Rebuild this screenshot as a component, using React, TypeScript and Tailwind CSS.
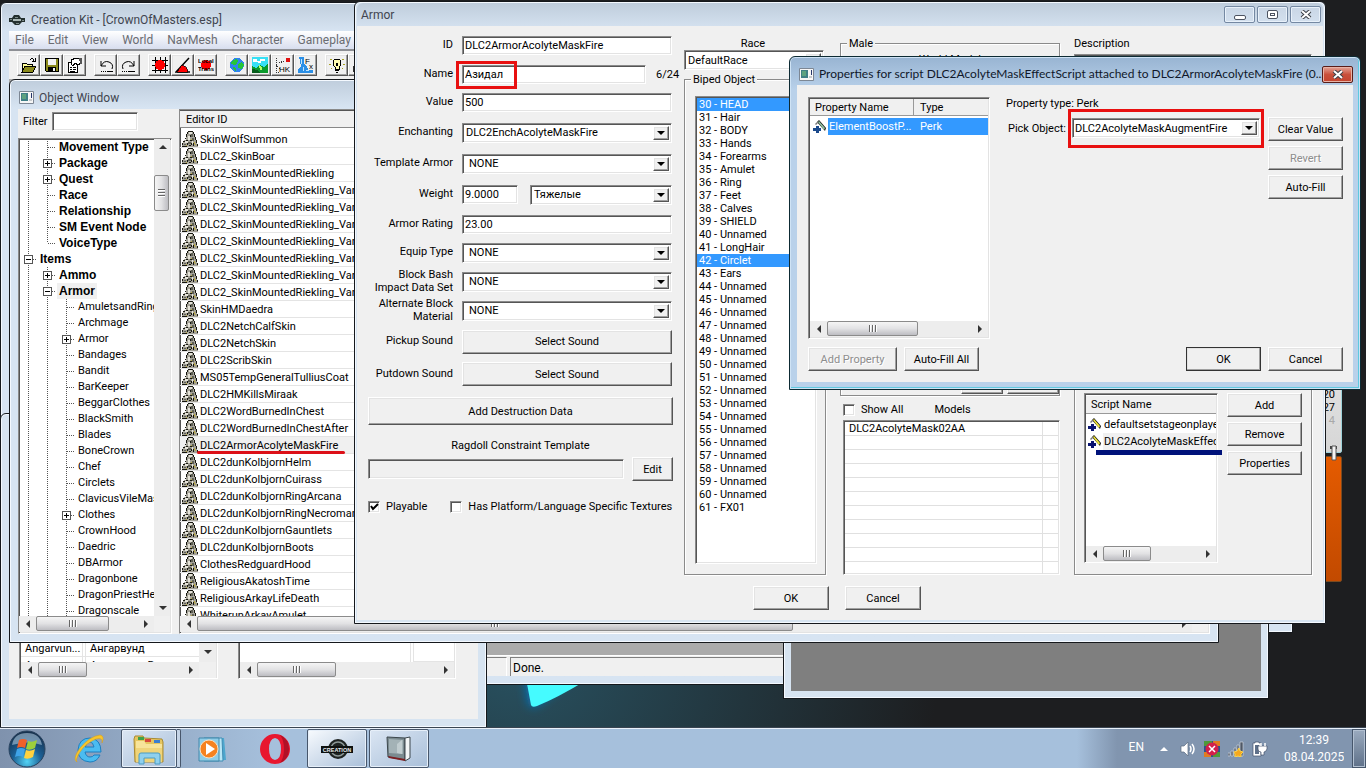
import type { ReactNode } from "react";

const msFont =
	"font-['Roboto','Liberation_Sans',sans-serif] text-[11px] leading-[13px] text-black";
const segoe = "font-['Roboto','Noto_Sans',sans-serif] text-xs";

const raised =
	"bg-[#f0f0f0] border border-t-white border-l-white border-b-[#555] border-r-[#555] shadow-[inset_-1px_-1px_0_#a0a0a0,inset_1px_1px_0_#e3e3e3]";
const sunken =
	"border border-t-[#8a8a8a] border-l-[#8a8a8a] border-b-white border-r-white shadow-[inset_1px_1px_0_#555,inset_-1px_-1px_0_#e3e3e3]";
const frame = "border border-[#15181c] shadow-[inset_0_0_0_1px_#f4f9ff] bg-[#d7e4f1]";
const captionInactive = "bg-linear-to-b from-[#bfcddc] to-[#d7e4f2] to-[28px]";
const thumbX =
	"bg-linear-to-b from-[#f5f5f5] via-[#e2e2e4] to-[#bdbdc2] border border-[#8b8b8b] rounded-xs";
const thumbY =
	"bg-linear-to-r from-[#f5f5f5] via-[#e2e2e4] to-[#bdbdc2] border border-[#8b8b8b] rounded-xs";

type TreeNode = {
	label: string;
	level: number;
	box?: "plus" | "minus";
	last?: boolean;
	selected?: boolean;
};

const tree: TreeNode[] = [
	{ label: "Movement Type", level: 1 },
	{ label: "Package", level: 1, box: "plus" },
	{ label: "Quest", level: 1, box: "plus" },
	{ label: "Race", level: 1 },
	{ label: "Relationship", level: 1 },
	{ label: "SM Event Node", level: 1 },
	{ label: "VoiceType", level: 1, last: true },
	{ label: "Items", level: 0, box: "minus" },
	{ label: "Ammo", level: 1, box: "plus" },
	{ label: "Armor", level: 1, box: "minus", selected: true },
	{ label: "AmuletsandRing", level: 2 },
	{ label: "Archmage", level: 2 },
	{ label: "Armor", level: 2, box: "plus" },
	{ label: "Bandages", level: 2 },
	{ label: "Bandit", level: 2 },
	{ label: "BarKeeper", level: 2 },
	{ label: "BeggarClothes", level: 2 },
	{ label: "BlackSmith", level: 2 },
	{ label: "Blades", level: 2 },
	{ label: "BoneCrown", level: 2 },
	{ label: "Chef", level: 2 },
	{ label: "Circlets", level: 2 },
	{ label: "ClavicusVileMas", level: 2 },
	{ label: "Clothes", level: 2, box: "plus" },
	{ label: "CrownHood", level: 2 },
	{ label: "Daedric", level: 2 },
	{ label: "DBArmor", level: 2 },
	{ label: "Dragonbone", level: 2 },
	{ label: "DragonPriestHe", level: 2 },
	{ label: "Dragonscale", level: 2 },
];

const editorIds = [
	"SkinWolfSummon",
	"DLC2_SkinBoar",
	"DLC2_SkinMountedRiekling",
	"DLC2_SkinMountedRiekling_Var01",
	"DLC2_SkinMountedRiekling_Var02",
	"DLC2_SkinMountedRiekling_Var03",
	"DLC2_SkinMountedRiekling_Var04",
	"DLC2_SkinMountedRiekling_Var05",
	"DLC2_SkinMountedRiekling_Var06",
	"DLC2_SkinMountedRiekling_Var07",
	"SkinHMDaedra",
	"DLC2NetchCalfSkin",
	"DLC2NetchSkin",
	"DLC2ScribSkin",
	"MS05TempGeneralTulliusCoat",
	"DLC2HMKillsMiraak",
	"DLC2WordBurnedInChest",
	"DLC2WordBurnedInChestAfter",
	"DLC2ArmorAcolyteMaskFire",
	"DLC2dunKolbjornHelm",
	"DLC2dunKolbjornCuirass",
	"DLC2dunKolbjornRingArcana",
	"DLC2dunKolbjornRingNecromancer",
	"DLC2dunKolbjornGauntlets",
	"DLC2dunKolbjornBoots",
	"ClothesRedguardHood",
	"ReligiousAkatoshTime",
	"ReligiousArkayLifeDeath",
	"WhiterunArkayAmulet",
];

const bipedNames: Record<number, string> = {
	30: "HEAD",
	31: "Hair",
	32: "BODY",
	33: "Hands",
	34: "Forearms",
	35: "Amulet",
	36: "Ring",
	37: "Feet",
	38: "Calves",
	39: "SHIELD",
	41: "LongHair",
	42: "Circlet",
	43: "Ears",
	61: "FX01",
};
const biped = Array.from({ length: 32 }, (_, i) => i + 30);

/* ---------- small shared controls ---------- */

const Arrow = ({ dir }: { dir: "left" | "right" | "up" | "down" }) => {
	const d = {
		left: "M6 0v8L2 4z",
		right: "M2 0v8l4-4z",
		up: "M0 6h8L4 2z",
		down: "M0 2h8L4 6z",
	}[dir];
	return (
		<svg className="size-2" viewBox="0 0 8 8" aria-hidden="true">
			<path d={d} fill="#333" />
		</svg>
	);
};

const ScrollBtn = ({ dir }: { dir: "left" | "right" | "up" | "down" }) => (
	<button
		type="button"
		aria-label={`Scroll ${dir}`}
		className="flex h-4 w-[17px] shrink-0 items-center justify-center"
	>
		<Arrow dir={dir} />
	</button>
);

const HScroll = ({ thumb }: { thumb: string }) => (
	<div className="flex h-4 shrink-0 bg-[#ededed]">
		<ScrollBtn dir="left" />
		<div className={`flex h-[15px] items-center justify-center gap-px ${thumbX} ${thumb}`}>
			<i className="h-[7px] w-0.5 border-r border-white bg-[#666]" />
			<i className="h-[7px] w-0.5 border-r border-white bg-[#666]" />
			<i className="h-[7px] w-0.5 border-r border-white bg-[#666]" />
		</div>
		<div className="flex-1" />
		<ScrollBtn dir="right" />
	</div>
);

const Button = ({
	children,
	className = "",
	disabled,
}: {
	children: ReactNode;
	className?: string;
	disabled?: boolean;
}) => (
	<button
		type="button"
		disabled={disabled}
		className={`flex h-6 items-center justify-center whitespace-nowrap ${raised} disabled:text-[#8d8d8d] disabled:[text-shadow:1px_1px_0_white] ${className}`}
	>
		{children}
	</button>
);

const Combo = ({
	id,
	value,
	className = "",
	pad = "pl-1",
}: {
	id: string;
	value: string;
	className?: string;
	pad?: string;
}) => (
	<div className={`flex h-5 bg-white p-0.5 ${sunken} ${className}`}>
		<select id={id} className={`min-w-0 flex-1 appearance-none outline-none ${pad}`}>
			<option>{value}</option>
		</select>
		<span className={`flex w-4 items-center justify-center ${raised}`} aria-hidden="true">
			<svg className="h-1 w-2" viewBox="0 0 8 4">
				<path d="M0 0h8L4 4z" />
			</svg>
		</span>
	</div>
);

const Field = ({
	id,
	label,
	row,
	children,
}: {
	id: string;
	label: string;
	row: string;
	children: ReactNode;
}) => (
	<div className={`flex items-center gap-[9px] pr-px ${row}`}>
		<label htmlFor={id} className="w-[85px] shrink-0 pb-0.5 text-right">
			{label}
		</label>
		<div className="flex flex-1 items-center">{children}</div>
	</div>
);

const TextBox = ({
	id,
	value,
	className = "flex-1",
}: {
	id: string;
	value: string;
	className?: string;
}) => (
	<input
		id={id}
		defaultValue={value}
		className={`h-[19px] min-w-0 bg-white px-0.5 outline-none ${sunken} ${className}`}
	/>
);

const Group = ({
	title,
	className = "",
	children,
}: {
	title?: string;
	className?: string;
	children?: ReactNode;
}) => (
	<fieldset
		className={`min-w-0 border border-[#8a8a8a] shadow-[1px_1px_0_white,inset_1px_1px_0_white] ${className}`}
	>
		{title && <legend className="ml-1.5 bg-[#f0f0f0] px-0.5">{title}</legend>}
		{children}
	</fieldset>
);

const CheckBox = ({ id, label, checked }: { id: string; label: string; checked?: boolean }) => (
	<label htmlFor={id} className="grid grid-cols-[12px_auto] items-center gap-x-1.5">
		<input
			id={id}
			type="checkbox"
			defaultChecked={checked}
			className={`peer col-start-1 row-start-1 size-3 appearance-none bg-white ${sunken}`}
		/>
		<svg
			className="pointer-events-none invisible col-start-1 row-start-1 size-3 peer-checked:visible"
			viewBox="0 0 12 12"
			aria-hidden="true"
		>
			<path d="M3 5l2 3 5-5" fill="none" stroke="#000" strokeWidth="2" />
		</svg>
		<span>{label}</span>
	</label>
);

/* ---------- icons ---------- */

const WindowIcon = () => (
	<svg className="h-[13px] w-[15px] shrink-0" viewBox="0 0 15 13" aria-hidden="true">
		<path d="M.5.5h14v12H.5z" fill="#f6f6f6" stroke="#7d8794" />
		<path d="M2 2h7v8H2z" fill="#3f7f86" />
		<path d="M3 3h4v5H3z" fill="#5da27f" />
		<path d="M12 2h1v5h-1z" fill="#26366a" />
		<path d="M10 8h3v2h-3z" fill="#c6c9cd" />
	</svg>
);

const ArmorIcon = () => (
	<svg
		className="h-4 w-4 shrink-0"
		viewBox="0 0 16 16"
		shapeRendering="crispEdges"
		aria-hidden="true"
	>
		<path d="M6 1h5v1h1v3h1v4h1v2h1v3h1v2H0v-2h1v-3h1V9h2V6h1V2h1z" fill="#a3a197" />
		<path d="M7 1h3v2H7zM6 5h2v4H6zM3 10h3v2H3zM10 10h1v3h-1z" fill="#e6e4da" />
		<path d="M9 3h2v3H9zM10 7h2v3h-2zM6 11h3v2H6zM2 13h2v1H2z" fill="#5e5f55" />
		<path
			d="M6 0h5v1H6zM5 1h1v2H5zM11 1h1v2h-1zM12 3h1v3h-1zM4 3h1v3H4zM8 4h1v2H8zM3 7h1v1H3zM13 6h1v3h-1zM4 9h2v1H4zM1 10h2v1H1zM8 9h2v1H8zM14 9h1v3h-1zM0 12h1v2H0zM5 12h1v2H5zM9 12h1v2H9zM15 13h1v2h-1zM0 15h5v1H0zM11 12h1v3h-1zM7 14h2v1H7z"
			fill="#16160f"
		/>
		<path d="M12 11h1v2h-1zM13 13h1v1h-1zM4 14h1v1H4zM9 8h1v1H9z" fill="#b9a83c" />
	</svg>
);

const ScriptIcon = ({ faded }: { faded?: boolean }) => (
	<svg className="h-[13px] w-[13px] shrink-0" viewBox="0 0 13 13" aria-hidden="true">
		<path d="M4 2l2-2 7 8-1 3z" fill="#111" />
		<path d="M5 2l1-1 6 7-1 2z" fill={faded ? "#8fbf9f" : "#f3e93a"} />
		<path d="M2 4l2-2 1 1-2 2z" fill="#777" />
		<path d="M3 6h3v2h2v3H6v2H3v-2H0V8h3z" fill={faded ? "#1b4a8c" : "#0a1470"} />
	</svg>
);

const ToolButton = ({ name, children }: { name: string; children: ReactNode }) => (
	<button
		type="button"
		aria-label={name}
		className={`flex h-[22px] w-[23px] items-center justify-center ${raised}`}
	>
		<svg className="size-4" viewBox="0 0 16 16" shapeRendering="crispEdges">
			{children}
		</svg>
	</button>
);

const Toolbar = () => (
	<div className="flex gap-2 pt-[3px] pl-2">
		<div className="flex">
			<ToolButton name="Open">
				<path d="M1 6h4l1 1h5v8H1z" fill="#ffff9a" stroke="#000" />
				<path d="M1 15l3-6h11l-3 6z" fill="#8b8a1c" stroke="#000" />
				<path d="M9 3q3-3 4 1M11 4h3V1" fill="none" stroke="#000" />
			</ToolButton>
			<ToolButton name="Save">
				<path d="M1.500 1.500h13v13h-12l-1-1z" fill="#8b8a1c" stroke="#000" />
				<path d="M4 2h8v6H4z" fill="#f2f2f2" />
				<path d="M4 10h8v4H4z" fill="#000" />
				<path d="M9 11h2v3H9z" fill="#f2f2f2" />
			</ToolButton>
			<ToolButton name="Properties">
				<path d="M1.500 5.500h9v10h-9z" fill="#fff" stroke="#000" />
				<path d="M3 10h2M6 10h3M3 12h2M6 12h3M3 14h5" stroke="#000" />
				<path d="M4 3l5-2h5v5l-3 2-3-2-2 3-2-2z" fill="#fff" stroke="#000" />
				<path d="M12 1h3v6h-2z" fill="#555" />
			</ToolButton>
		</div>
		<div className="flex">
			<ToolButton name="Undo">
				<path d="M3 9q3-6 8-4t3 7M3 4v5h5" fill="none" stroke="#000" shapeRendering="auto" />
				<path d="M3 14h1M5 14h1M7 14h1M9 14h6" stroke="#000" />
			</ToolButton>
			<ToolButton name="Redo">
				<path d="M13 9q-3-6-8-4t-3 7M13 4v5H8" fill="none" stroke="#000" shapeRendering="auto" />
				<path d="M1 14h1M3 14h1M5 14h1M7 14h7" stroke="#000" />
			</ToolButton>
		</div>
		<div className="flex">
			<ToolButton name="Snap to grid">
				<path d="M3 0v16M8 0v16M13 0v16M0 3h16M0 8h16M0 13h16" stroke="#000" />
				<circle cx="8" cy="8" r="5" fill="#f00" />
			</ToolButton>
			<ToolButton name="Snap to angle">
				<path d="M14 1L1 15h14" fill="none" stroke="#000" strokeWidth="1.500" shapeRendering="auto" />
				<path d="M7 8q5 1 6 7H2z" fill="#f00" stroke="#000" strokeWidth=".7" />
			</ToolButton>
			<ToolButton name="Local transform">
				<circle cx="8" cy="8" r="5" fill="#f00" />
				<text x="0" y="6" fontSize="6" fontWeight="700" fontFamily="Liberation Sans">
					Local
				</text>
				<text x="0" y="14" fontSize="6" fontWeight="700" fontFamily="Liberation Sans">
					Trans
				</text>
			</ToolButton>
		</div>
		<div className="flex">
			<ToolButton name="World">
				<circle cx="8" cy="8" r="7" fill="#2f83ee" />
				<path d="M3 4l4-2 2 2-1 3-3 1-3-1zM9 7l4-2 2 3-2 4-4-1zM4 10l3 1v3l-3-2z" fill="#25c43a" />
			</ToolButton>
			<ToolButton name="Landscape">
				<path d="M0 0h16v16H0z" fill="#37e0f5" />
				<path d="M1 2h4v2h3V2h5v2H9v2H6V5H1z" fill="#fff" />
				<path d="M0 9l4 2 4-3 4 2 4-3v9H0z" fill="#0a9a2c" />
				<path d="M0 12l5 1 3 3H0z" fill="#065c1d" />
				<path d="M7 8l3 2v3H8z" fill="#b7ff66" />
			</ToolButton>
			<ToolButton name="Havok">
				<path d="M1 1v14M1 15h4M1 8l4 4M4 6l5-2" stroke="#333" strokeDasharray="1 1" fill="none" />
				<circle cx="13" cy="3" r="2.500" fill="#e01010" />
				<text x="4" y="15" fontSize="8" fontFamily="Liberation Sans">
					HK
				</text>
			</ToolButton>
			<ToolButton name="Effects">
				<path d="M1 0h5v7q4 2 4 6h5v3H0v-4l3-3z" fill="#2b8fe6" />
				<path d="M3 2h1v5H3zM5 10h1v4H5zM8 13h3v1H8z" fill="#bfe4ff" />
				<text x="7" y="7" fontSize="8" fontFamily="Liberation Sans">
					F
				</text>
				<text x="11" y="12" fontSize="8" fontFamily="Liberation Sans">
					x
				</text>
			</ToolButton>
		</div>
		<div className="flex">
			<ToolButton name="Lights">
				<path d="M8 2q4 0 4 4 0 2-2 4v2H6v-2Q4 8 4 6q0-4 4-4z" fill="#fffbb0" stroke="#000" />
				<path d="M6 13h4M7 15h2M7 6l1 3 1-3" stroke="#000" fill="none" />
				<path d="M1 2l2 1M15 2l-2 1M0 7h2M14 7h2M2 12l1-1M14 12l-1-1" stroke="#a8a020" />
			</ToolButton>
			<ToolButton name="Sky">
				<path d="M2 4q3-3 5 0M1 12q0-4 4-3" stroke="#666" fill="none" />
				<circle cx="4" cy="12" r="3" fill="#bbb" stroke="#333" />
			</ToolButton>
		</div>
	</div>
);

const CaptionButton = ({ name, children }: { name: string; children: ReactNode }) => (
	<button
		type="button"
		aria-label={name}
		className="flex h-[17px] w-[31px] items-center justify-center rounded-xs border border-[#7488a2] bg-linear-to-b from-[#c9d6e6] to-[#d3e0ee] shadow-[inset_0_0_0_1px_#e8f1fa]"
	>
		{children}
	</button>
);

const CloseGlyph = () => (
	<svg className="h-[9px] w-3" viewBox="0 0 12 9" aria-hidden="true">
		<path d="M2 1l8 7M10 1L2 8" stroke="#3c4048" strokeWidth="4" />
		<path d="M2 1l8 7M10 1L2 8" stroke="#fff" strokeWidth="2" />
	</svg>
);

/* ---------- windows ---------- */

const menus = ["File", "Edit", "View", "World", "NavMesh", "Character", "Gameplay"];

const MainWindow = () => (
	<section
		className={`absolute top-0.5 left-0 flex h-[683px] w-[1250px] flex-col rounded-t-md px-2 pb-2 ${frame} ${captionInactive}`}
	>
		<header className="flex h-[28px] shrink-0 items-center gap-1.5 pt-1.5">
			<svg className="h-3 w-4" viewBox="0 0 16 12" aria-hidden="true">
				<path d="M0 4h3l2-3h5l2 3h4v4h-3l-3 3H6L3 8H0z" fill="#24302f" />
				<path d="M4 5h8v2H4z" fill="#a9b7b4" />
				<path d="M1 5h2v1H1zM13 6h2v1h-2zM6 3h3v1H6zM7 9h3v1H7z" fill="#7d8c8a" />
			</svg>
			<h1 className={`text-[#41454f] ${segoe}`}>Creation Kit - [CrownOfMasters.esp]</h1>
		</header>
		<nav
			className={`flex h-[18px] shrink-0 gap-[14px] bg-linear-to-b from-white to-[#d8deef] pl-1.5 leading-[18px] text-[#6a6c72] ${segoe}`}
		>
			{menus.map((m) => (
				<button key={m} type="button">
					{m}
				</button>
			))}
		</nav>
		<div className="h-[30px] shrink-0 border-t-2 border-[#8d8f94] bg-[#f0f0f0]">
			<Toolbar />
		</div>
		<div className="flex-1 bg-[#ababab]" />
		<footer
			className={`flex h-[21px] shrink-0 gap-[3px] border-t border-white bg-[#f0f0f0] pt-px ${msFont}`}
		>
			<div className="w-[498px] border-t border-r border-t-[#808080] border-r-white" />
			<div className="flex-1 border-t border-l border-[#808080] pl-0.5 text-xs leading-5">Done.</div>
		</footer>
	</section>
);

const regions = [
	["Angarvun...", "Ангарвунд"],
	["Angarvun...", "Ангарвунд Вход"],
];

const CellView = () => (
	<section
		className={`absolute top-[413px] left-0 flex h-[315px] w-[487px] flex-col rounded-t-md px-2 pt-7 pb-2 ${frame} ${msFont}`}
	>
		<div className="flex flex-1 items-end gap-5 overflow-hidden bg-[#f0f0f0] pb-10 pl-2.5">
			<div className={`flex h-[220px] w-[199px] flex-col bg-white px-px ${sunken}`}>
				<div className="flex min-h-0 flex-1">
					<div className="flex flex-1 flex-col justify-end overflow-hidden">
						<table className="-mb-3 w-full border-separate border-spacing-0">
							<tbody>
								{regions.map(([id, name]) => (
									<tr key={name}>
										<td className="h-[17px] w-[62px] border-r border-b border-[#e4e4e4] pl-1">{id}</td>
										<td className="w-[3px] border-r border-b border-[#e4e4e4]" />
										<td className="border-b border-[#e4e4e4] pl-1">{name}</td>
									</tr>
								))}
							</tbody>
						</table>
					</div>
					<div className="flex items-end bg-[#ededed] pb-0.5">
						<ScrollBtn dir="down" />
					</div>
				</div>
				<div className="bg-[#f0f0f0] pr-[17px]">
					<HScroll thumb="w-[49px]" />
				</div>
			</div>
			<div className={`flex h-[220px] w-[218px] flex-col bg-white px-px ${sunken}`}>
				<div className="flex flex-1 justify-end">
					<div className="w-1 border-x border-[#e4e4e4]" />
					<div className="w-[40px] border-b border-[#e4e4e4]" />
				</div>
				<HScroll thumb="w-[79px]" />
			</div>
		</div>
	</section>
);

const TreeCell = ({ kind }: { kind: "line" | "tee" | "end" | "plus" | "minus" }) => {
	const boxed = kind === "plus" || kind === "minus";
	return (
		<svg
			className="h-4 w-[19px] shrink-0"
			viewBox="0 0 19 16"
			shapeRendering="crispEdges"
			aria-hidden="true"
		>
			<path d={kind === "end" ? "M9.500 0v8" : "M9.500 0v16"} stroke="#555" strokeDasharray="1 1" />
			{kind !== "line" && <path d="M10 8.500h8" stroke="#555" strokeDasharray="1 1" />}
			{boxed && <path d="M5.500 4.500h8v8h-8z" fill="#fff" stroke="#555" />}
			{boxed && <path d="M7 8.500h5" stroke="#000" />}
			{kind === "plus" && <path d="M9.500 6v5" stroke="#000" />}
		</svg>
	);
};

const TreeRow = ({ node }: { node: TreeNode }) => (
	<li className="flex h-4">
		{Array.from({ length: node.level }, (_, i) => (
			<TreeCell key={i} kind="line" />
		))}
		<TreeCell kind={node.box ?? (node.last ? "end" : "tee")} />
		<span
			className={`px-0.5 leading-4 whitespace-nowrap ${node.level < 2 ? "font-['Liberation_Sans',sans-serif] text-xs leading-4 font-bold" : ""} ${node.selected ? "bg-[#f0f0f0]" : ""}`}
		>
			{node.label}
		</span>
	</li>
);

const ObjectWindow = () => (
	<section
		className={`absolute top-[79px] left-[9px] flex h-[564px] w-[1210px] flex-col rounded-t-md px-2 pb-2 ${frame} ${captionInactive} ${msFont}`}
	>
		<header className="flex h-[29px] shrink-0 items-center gap-[5px] pt-1.5 pl-px">
			<WindowIcon />
			<h2 className={`text-[#41454f] ${segoe}`}>Object Window</h2>
		</header>
		<div className="flex min-h-0 flex-1 gap-[7px] bg-[#f0f0f0]">
			<div className="flex w-[154px] flex-col">
				<div className="flex h-[29px] shrink-0 items-start gap-1 pt-[3px] pl-[5px]">
					<label htmlFor="filter" className="pt-[3px]">
						Filter
					</label>
					<TextBox id="filter" value="" className="w-[86px]" />
				</div>
				<div className={`flex min-h-0 flex-1 flex-col bg-white pr-px pb-px ${sunken}`}>
					<div className="flex min-h-0 flex-1">
						<ul className="flex-1 overflow-hidden">
							{tree.map((n, i) => (
								<TreeRow key={i} node={n} />
							))}
						</ul>
						<div className="flex w-4 flex-col bg-[#ededed]">
							<ScrollBtn dir="up" />
							<div
								className={`mt-5 flex h-9 w-[15px] flex-col items-center justify-center gap-px ${thumbY}`}
							>
								<i className="h-0.5 w-[7px] border-b border-white bg-[#666]" />
								<i className="h-0.5 w-[7px] border-b border-white bg-[#666]" />
								<i className="h-0.5 w-[7px] border-b border-white bg-[#666]" />
							</div>
							<div className="flex-1" />
							<ScrollBtn dir="down" />
						</div>
					</div>
					<div className="bg-[#f0f0f0] pr-4">
						<HScroll thumb="w-[73px]" />
					</div>
				</div>
			</div>
			<div className={`flex min-w-0 flex-1 flex-col bg-white py-px pr-px ${sunken}`}>
				<div className="min-h-0 flex-1 overflow-hidden">
					<table className="w-full border-separate border-spacing-0">
						<thead>
							<tr>
								<th className="h-[17px] border-b border-[#888] bg-[#f0f0f0] pl-1.5 text-left font-normal">
									Editor ID
								</th>
							</tr>
							<tr>
								<td className="h-[3px] p-0" />
							</tr>
						</thead>
						<tbody>
							{editorIds.map((id) => (
								<tr key={id} className={id === "DLC2ArmorAcolyteMaskFire" ? "bg-[#f0f0f0]" : ""}>
									<td className="h-[17px] border-b border-[#e4e4e4] p-0">
										<span className="flex h-4 items-center gap-0.5 pl-0.5">
											<ArmorIcon />
											{id}
										</span>
									</td>
								</tr>
							))}
						</tbody>
					</table>
				</div>
				<div className="bg-[#f0f0f0] pr-4">
					<HScroll thumb="w-[596px]" />
				</div>
			</div>
		</div>
	</section>
);

const noneCombos = [
	{ id: "equip", label: "Equip Type" },
	{ id: "bash", label: "Block Bash Impact Data Set" },
	{ id: "alt", label: "Alternate Block Material" },
];

const ArmorForm = () => (
	<div className="w-[305px] pt-[5px]">
		<Field id="armor-id" label="ID" row="h-[29px]">
			<TextBox id="armor-id" value="DLC2ArmorAcolyteMaskFire" />
		</Field>
		<Field id="armor-name" label="Name" row="h-[29px]">
			<TextBox id="armor-name" value="Азидал" className="w-[184px]" />
			<span className="pl-2.5">6/24</span>
		</Field>
		<Field id="armor-value" label="Value" row="h-[27px]">
			<TextBox id="armor-value" value="500" />
		</Field>
		<Field id="ench" label="Enchanting" row="h-[33px]">
			<Combo id="ench" value="DLC2EnchAcolyteMaskFire" className="flex-1" pad="pl-px" />
		</Field>
		<Field id="template" label="Template Armor" row="h-[29px]">
			<Combo id="template" value="NONE" className="flex-1" />
		</Field>
		<Field id="weight" label="Weight" row="h-[33px]">
			<TextBox id="weight" value="9.0000" className="mr-3 w-[56px]" />
			<Combo id="weight-class" value="Тяжелые" className="flex-1" pad="pl-px" />
		</Field>
		<Field id="rating" label="Armor Rating" row="h-[27px]">
			<TextBox id="rating" value="23.00" />
		</Field>
		{noneCombos.map((c) => (
			<Field key={c.id} id={c.id} label={c.label} row="h-[29px]">
				<Combo id={c.id} value="NONE" className="flex-1" />
			</Field>
		))}
		<Field id="pickup" label="Pickup Sound" row="h-[33px]">
			<Button className="flex-1">Select Sound</Button>
		</Field>
		<Field id="putdown" label="Putdown Sound" row="h-8">
			<Button className="flex-1">Select Sound</Button>
		</Field>
		<Button className="mt-[7px] h-7 w-full">Add Destruction Data</Button>
		<label htmlFor="ragdoll" className="mt-3.5 block text-center">
			Ragdoll Constraint Template
		</label>
		<div className="mt-[5px] flex items-center gap-2">
			<input id="ragdoll" readOnly className={`h-5 min-w-0 flex-1 bg-[#f0f0f0] ${sunken}`} />
			<Button className="h-5 w-[41px]">Edit</Button>
		</div>
		<div className="mt-[19px] flex items-center gap-[23px] whitespace-nowrap">
			<CheckBox id="playable" label="Playable" checked />
			<CheckBox id="platform" label="Has Platform/Language Specific Textures" />
		</div>
	</div>
);

const ArmorWindow = () => (
	<section
		className={`absolute top-px left-[354px] flex h-[623px] w-[972px] flex-col rounded-t-md px-[2px] pt-px pb-[3px] ${frame} ${msFont}`}
	>
		<header
			className={`flex h-[23px] shrink-0 items-center justify-between rounded-t-md pr-0.5 pl-1 ${captionInactive}`}
		>
			<h2 className={`text-[#41454f] ${segoe}`}>Armor</h2>
			<div className="flex gap-0.5">
				<CaptionButton name="Minimize">
					<span className="mt-1.5 h-[5px] w-3 rounded-xs border border-[#4c5361] bg-white" />
				</CaptionButton>
				<CaptionButton name="Maximize">
					<span className="h-[9px] w-[11px] rounded-xs border border-[#4c5361] bg-white p-0.5">
						<span className="block h-full border border-[#4c5361]" />
					</span>
				</CaptionButton>
				<CaptionButton name="Close">
					<CloseGlyph />
				</CaptionButton>
			</div>
		</header>
		<div className="flex flex-1 flex-col bg-[#f0f0f0] pl-[11px]">
			<div className="flex h-[549px]">
				<ArmorForm />
				<div className="ml-[11px] flex w-[142px] flex-col pt-[11px]">
					<label htmlFor="race" className="pr-1 text-center">
						Race
					</label>
					<Combo id="race" value="DefaultRace" className="w-[140px]" pad="pl-px" />
					<Group title="Biped Object" className="mt-[3px] flex-1">
						<div className="h-full px-2.5 pt-2.5 pb-2.5">
							<ul
								role="listbox"
								aria-label="Biped Object"
								className={`h-full w-[122px] overflow-hidden bg-white px-px pt-px ${sunken}`}
							>
								{biped.map((n) => (
									<li
										key={n}
										role="option"
										aria-selected={n === 30 || n === 42}
										className="h-[13px] pl-0.5 aria-selected:bg-[#3399ff] aria-selected:text-white"
									>
										{n} - {bipedNames[n] ?? "Unnamed"}
									</li>
								))}
							</ul>
						</div>
					</Group>
				</div>
				<div className="ml-3.5 flex w-[220px] flex-col pt-[11px]">
					<Group title="Male" className="flex h-[359px] flex-col">
						<p className="pt-[3px] text-center">World Model</p>
						<div className="mt-[304px] flex justify-end gap-1">
							<Button className="w-[42px]">Edit</Button>
							<Button className="w-[52px]">Clear</Button>
						</div>
					</Group>
					<div className="flex h-5 items-end gap-[31px] pl-[3px]">
						<CheckBox id="show-all" label="Show All" />
						<span>Models</span>
					</div>
					<div className={`mt-1 ml-[3px] flex-1 overflow-hidden bg-white p-px ${sunken}`}>
						<table className="w-full border-separate border-spacing-0" aria-label="Models">
							<tbody>
								{Array.from({ length: 11 }, (_, i) => (
									<tr key={i}>
										<td className="h-3.5 w-[198px] border-r border-b border-[#e0e0e0] pl-1">
											{i === 0 ? "DLC2AcolyteMask02AA" : ""}
										</td>
										<td className="border-b border-[#e0e0e0]" />
									</tr>
								))}
							</tbody>
						</table>
					</div>
				</div>
				<div className="ml-3.5 flex w-[238px] flex-col pt-[11px]">
					<label htmlFor="desc">Description</label>
					<textarea id="desc" className={`mt-1 h-20 resize-none bg-white ${sunken}`} />
					<Group className="mt-2 flex flex-1 items-end pb-[11px] pl-[9px]">
						<div className="flex h-[170px] gap-[9px]">
							<div className={`flex w-[134px] flex-col bg-white pt-0.5 pr-px pl-px ${sunken}`}>
								<div className="flex-1 overflow-hidden">
									<table className="w-full border-separate border-spacing-0">
										<thead>
											<tr>
												<th className="h-[18px] border-b border-[#999] bg-[#f0f0f0] pl-[5px] text-left font-normal">
													Script Name
												</th>
											</tr>
										</thead>
										<tbody>
											{["defaultsetstageonplaye", "DLC2AcolyteMaskEffect"].map((s, i) => (
												<tr key={s}>
													<td className={i === 0 ? "p-0 pt-0.5" : "p-0"}>
														<span className="flex h-[17px] w-[130px] items-center gap-0.5 overflow-hidden pl-0.5">
															<ScriptIcon />
															<span className={`flex-1 pl-px leading-[17px] ${i === 1 ? "bg-[#f0f0f0]" : ""}`}>
																{s}
															</span>
														</span>
													</td>
												</tr>
											))}
										</tbody>
									</table>
								</div>
								<HScroll thumb="w-12" />
							</div>
							<div className="flex w-[75px] flex-col gap-[5px]">
								<Button>Add</Button>
								<Button>Remove</Button>
								<Button>Properties</Button>
							</div>
						</div>
					</Group>
				</div>
			</div>
			<div className="mt-[11px] flex gap-4 pl-[385px]">
				<Button className="w-[76px]">OK</Button>
				<Button className="w-[76px]">Cancel</Button>
			</div>
		</div>
	</section>
);

const PropertiesWindow = () => (
	<section
		className={`absolute top-14 left-[789px] flex h-[334px] w-[572px] flex-col rounded-t-md border border-[#0d2a33] bg-linear-to-b from-[#98b4d2] via-[#b9d1ea] via-10% to-[#b9d1ea] px-[7px] pb-[7px] shadow-[inset_0_0_0_1px_#cfe3f5,inset_-1px_-1px_0_1px_#5fc9e0] ${msFont}`}
	>
		<header className="flex h-7 shrink-0 items-center justify-between pt-1.5 pl-0.5">
			<div className="flex min-w-0 items-center gap-[5px] whitespace-nowrap">
				<WindowIcon />
				<h2 className="font-['Lato','Noto_Sans',sans-serif] text-xs text-[#10182a]">
					Properties for script DLC2AcolyteMaskEffectScript attached to DLC2ArmorAcolyteMaskFire (0...
				</h2>
			</div>
			<button
				type="button"
				aria-label="Close"
				className="flex h-[17px] w-[31px] shrink-0 items-center justify-center rounded-xs border border-[#5a1d18] bg-linear-to-b from-[#e1a397] via-[#c9503c] to-[#c4442f] shadow-[inset_0_0_0_1px_#e8b3a6]"
			>
				<CloseGlyph />
			</button>
		</header>
		<div className="flex flex-1 flex-col bg-[#f0f0f0] pt-3 pr-2.5 pb-[11px] pl-[11px]">
			<div className="flex flex-1">
				<div className={`flex h-[242px] w-[182px] shrink-0 flex-col bg-white p-px ${sunken}`}>
					<table className="w-full border-separate border-spacing-0">
						<thead>
							<tr className="text-left">
								<th className="h-[17px] w-[104px] border-r border-b border-[#999] bg-[#f0f0f0] pl-[5px] font-normal">
									Property Name
								</th>
								<th className="border-b border-[#999] bg-[#f0f0f0] pl-1.5 font-normal">Type</th>
							</tr>
						</thead>
						<tbody>
							<tr>
								<td className="p-0 pt-0.5">
									<span className="flex h-[17px] items-center gap-0.5 pl-[3px]">
										<ScriptIcon faded />
										<span className="flex-1 bg-[#3399ff] pl-px leading-[17px] text-white">
											ElementBoostP...
										</span>
									</span>
								</td>
								<td className="p-0 pt-0.5">
									<span className="block h-[17px] bg-[#3399ff] pl-1.5 leading-[17px] text-white">Perk</span>
								</td>
							</tr>
						</tbody>
					</table>
					<div className="flex-1" />
					<HScroll thumb="w-[91px]" />
				</div>
				{/* the type line runs on over the picker's column */}
				<div className="min-w-0 flex-1 pl-4 whitespace-nowrap">
					<p>Property type: Perk</p>
					<label htmlFor="pick" className="mt-3 block pl-0.5">
						Pick Object:
					</label>
				</div>
				<div className="mt-3 shrink-0 self-start border-3 border-[#e81010] px-px pt-1.5 pb-[7px]">
					<Combo id="pick" value="DLC2AcolyteMaskAugmentFire" className="w-[188px]" pad="pl-0" />
				</div>
				<div className="ml-1 flex w-[75px] shrink-0 flex-col gap-[5px] pt-5">
					<Button>Clear Value</Button>
					<Button disabled>Revert</Button>
					<Button>Auto-Fill</Button>
				</div>
			</div>
			<div className="flex gap-[7px]">
				<Button disabled className="w-[89px]">
					Add Property
				</Button>
				<Button className="w-[75px]">Auto-Fill All</Button>
				<div className="flex-1" />
				<Button className="w-[75px] outline outline-offset-[-1px] outline-[#333]">OK</Button>
				<Button className="w-[75px]">Cancel</Button>
			</div>
		</div>
	</section>
);

const Wallpaper = () => (
	<svg
		className="absolute bottom-0 left-[487px] h-[60px] w-[300px]"
		viewBox="0 0 300 60"
		aria-hidden="true"
	>
		<defs>
			<filter id="glow" x="-50%" y="-50%" width="200%" height="200%">
				<feGaussianBlur stdDeviation="5" />
			</filter>
		</defs>
		<path d="M36 0h62L50 38q-6 3-9-2z" fill="#0d6fb0" filter="url(#glow)" />
		<path d="M37 0h61v13Q70 30 50 38q-5 2-6-1z" fill="#45fbff" />
	</svg>
);

const Gadget = () => (
	<div className={`absolute top-[300px] left-[1280px] w-[62px] text-right ${msFont}`}>
		<div className="flex h-[153px] flex-col justify-end rounded-xs border border-[#9fd3da] bg-linear-to-b from-[#ececec] to-[#d6d6d6] pr-1.5 pb-[25px]">
			<p>20</p>
			<p>27</p>
			<p className="text-[#a8a8a8]">4</p>
		</div>
		<div className="mt-[3px] h-[126px] rounded-xs border border-[#7a4a20] bg-linear-to-b from-[#e55b00] to-[#c24a00]" />
		<svg className="absolute top-[145px] right-1 h-4 w-2" viewBox="0 0 8 16" aria-hidden="true">
			<path d="M0 1h7v3H0z" fill="#444" />
			<path d="M2 1h4v14H2z" fill="#f3f3f3" stroke="#555" />
		</svg>
	</div>
);

/* ---------- taskbar ---------- */

const TaskButton = ({
	name,
	look = "",
	children,
}: {
	name: string;
	look?: string;
	children: ReactNode;
}) => (
	<button type="button" aria-label={name} className={`flex h-full items-center justify-center ${look}`}>
		{children}
	</button>
);

const openTask =
	"border border-[#47566b] rounded-xs bg-linear-to-br to-[#a9bfd9] shadow-[inset_0_0_0_1px_#e6eff9]";

const Taskbar = () => (
	<footer className="relative flex h-10 shrink-0 border-t border-[#e9f1fa] bg-linear-to-r from-[#7f92ad] via-[#a6c0dc] via-20% to-[#a6c0dc] shadow-[0_-1px_0_#3a4552]">
		<TaskButton name="Start" look="w-[54px]">
			<svg className="size-[38px]" viewBox="0 0 38 38" aria-hidden="true">
				<defs>
					<radialGradient id="orb" cx="50%" cy="85%" r="80%">
						<stop offset="0" stopColor="#53d3f5" />
						<stop offset=".5" stopColor="#1b5f94" />
						<stop offset="1" stopColor="#17324f" />
					</radialGradient>
				</defs>
				<circle cx="19" cy="19" r="18" fill="url(#orb)" stroke="#29425e" />
				<path d="M4 15Q6 3 19 3t15 12q-14-5-30 0z" fill="#b9d3e8" opacity=".55" />
				<path d="M11 10q4-2 8 0l-2 8q-4-2-8 0z" fill="#f0602a" />
				<path d="M20 11q4 2 9-1l-2 8q-5 3-9 1z" fill="#9ccf3c" />
				<path d="M9 19q4-2 8 0l-2 8q-4-2-8 0z" fill="#3fa3e8" />
				<path d="M18 20q4 2 9-1l-2 8q-5 3-9 1z" fill="#ffd23f" />
			</svg>
		</TaskButton>
		<TaskButton name="Internet Explorer" look="ml-2 w-[54px]">
			<svg className="size-8" viewBox="0 0 32 32" aria-hidden="true">
				<path
					d="M28 19H12q1 5 5 5 3 0 4-2h6q-3 7-10 7Q5 28 5 17 6 5 17 5q11 1 11 14zM21 14q-1-5-4-5t-5 5z"
					fill="#4bbcf0"
					stroke="#1d7fc0"
				/>
				<path
					d="M4 29q-5-3 3-14Q17 3 27 2q5 1 2 8 1-6-6-4Q13 10 7 19q-5 8-3 10z"
					fill="#f7c52c"
					stroke="#d99c14"
					strokeWidth=".5"
				/>
			</svg>
		</TaskButton>
		<TaskButton name="Explorer" look={`ml-[5px] w-[56px] from-[#dbe6f3] ${openTask}`}>
			<svg className="size-8" viewBox="0 0 32 32" aria-hidden="true">
				<path d="M1 6l1-3h8l1 2 18 1 1 3v20H2z" fill="#e6c65f" stroke="#a88a35" />
				<path d="M5 4h6v3H5z" fill="#3fa24a" />
				<path d="M12 6h6v3h-6z" fill="#d8483c" />
				<path d="M21 7h6v3h-6z" fill="#3c7fd0" />
				<path d="M3 8h8l2 3h16v17H3z" fill="#f7e49a" />
				<path d="M3 15h26v14H3z" fill="#efd47a" />
				<path d="M6 31v-9q0-2 2-2h17q2 0 2 2v9h-5v-6H11v6z" fill="#8fd0ee" stroke="#4a9cc4" />
			</svg>
		</TaskButton>
		<span className="h-full w-1 rounded-r-xs border-y border-r border-[#47566b] bg-[#c5d4e6]" />
		<TaskButton name="Media Player" look="ml-[3px] w-[56px]">
			<svg className="size-8" viewBox="0 0 32 32" aria-hidden="true">
				<path d="M10 5h18l2 22H12z" fill="#4da7ce" />
				<path d="M8 5h18l1 23H8z" fill="#b8e6f5" stroke="#3f8cb3" />
				<path d="M3 5h20v23H3z" fill="#8fcde8" stroke="#4388aa" />
				<circle cx="13" cy="16" r="9" fill="#f58220" stroke="#fbe0c0" />
				<path d="M10 10v12l9-6z" fill="#fff" />
			</svg>
		</TaskButton>
		<TaskButton name="Opera" look="ml-2 w-[54px]">
			<svg className="size-8" viewBox="0 0 32 32" aria-hidden="true">
				<path
					d="M16 1a15 15 0 100 30 15 15 0 000-30zm0 4q6 1 6 11t-6 11q-6-1-6-11T16 5z"
					fill="#e8172f"
					fillRule="evenodd"
				/>
				<path d="M21 2q9 4 9 14t-9 14q4-5 4-14T21 2z" fill="#b01126" />
			</svg>
		</TaskButton>
		<TaskButton name="Creation Kit" look={`ml-[5px] w-[60px] from-[#f8fbfe] ${openTask}`}>
			<svg className="h-6 w-8" viewBox="0 0 32 24" aria-hidden="true">
				<circle cx="17" cy="12" r="10" fill="#1e2322" />
				<circle cx="17" cy="12" r="7" fill="none" stroke="#8e9a99" strokeWidth="1.500" />
				<path d="M0 9h32v7H0z" fill="#0e1110" />
				<text
					x="16"
					y="14.500"
					fontSize="5.500"
					fontWeight="700"
					fill="#e8eeee"
					textAnchor="middle"
					fontFamily="Liberation Sans"
				>
					CREATION
				</text>
			</svg>
		</TaskButton>
		<TaskButton name="Drive" look={`ml-0.5 w-[60px] from-[#dbe6f3] ${openTask}`}>
			<svg className="size-7" viewBox="0 0 28 28" aria-hidden="true">
				<path d="M2 2l18 1v22L3 22z" fill="#7b8b90" stroke="#3c474c" />
				<path d="M4 4l14 1v14L4 18z" fill="#a3b2b6" />
				<path d="M12 9l5-4v14l-5-1z" fill="#c0cccf" />
				<path d="M20 3l5-1v21l-5 3z" fill="#f2f5f6" stroke="#3c474c" />
				<path d="M3 21l17 3v2L4 23z" fill="#7d1f22" />
			</svg>
		</TaskButton>
		<div className="flex-1" />
		<div
			className={`flex items-center bg-linear-to-r from-transparent to-[#8195af] to-15% pl-[52px] text-white ${segoe}`}
		>
			<span className="pb-1">EN</span>
			<div className="ml-4 flex items-center gap-2">
				<svg className="h-1 w-2" viewBox="0 0 8 4" aria-hidden="true">
					<path d="M0 4l4-4 4 4z" fill="#fff" />
				</svg>
				<svg className="ml-1 size-4" viewBox="0 0 16 16" aria-hidden="true">
					<path d="M1 5h3l4-4v14l-4-4H1z" fill="#fff" stroke="#5a6a80" strokeWidth=".7" />
					<path d="M10 5q2 3 0 6M12 3q4 5 0 10" stroke="#fff" fill="none" strokeWidth="1.500" />
				</svg>
				<svg className="size-4" viewBox="0 0 16 16" aria-hidden="true">
					<path d="M0 0h16v16H0z" fill="#29538f" />
					<path d="M0 0h8v5H0zM9 11h7v5H9z" fill="#4e9a3a" />
					<path d="M9 0h7v5H9zM0 11h7v5H0z" fill="#df7c20" />
					<circle cx="8" cy="8" r="6.500" fill="#d31f4a" />
					<path d="M5 5l6 6M11 5l-6 6" stroke="#fff" strokeWidth="1.500" />
				</svg>
				<svg className="size-4" viewBox="0 0 16 16" aria-hidden="true">
					<path
						d="M0 12h2v3H0zM3 10h2v5H3zM6 7h2v8H6zM9 4h2v11H9zM12 1h3v14h-3z"
						fill="#4f5866"
						stroke="#d9dfe6"
						strokeWidth=".6"
					/>
					<path d="M11 7l1 3 3 1-2 2v3l-3-1-3 1v-3l-1-2 3-1z" fill="#f7a81d" stroke="#fbd34a" />
				</svg>
				<svg className="size-4" viewBox="0 0 16 16" aria-hidden="true">
					<path d="M3 1h4v1h2v13H1V2h2z" fill="#fff" stroke="#44516a" strokeWidth=".7" />
					<path d="M3 4h4v9H3z" fill="#5f7089" />
					<path d="M6 5h9v3q-1 3-3 3v3H9v-3q-3 0-3-3z" fill="#fff" stroke="#44516a" strokeWidth=".7" />
					<path d="M9 2v3M13 2v3" stroke="#fff" strokeWidth="1.500" />
				</svg>
			</div>
			<time className="ml-4 w-[60px] text-center leading-[17px]">
				12:39
				<br />
				08.04.2025
			</time>
		</div>
		<div className="flex bg-[#8195af] pl-2">
			<button
				type="button"
				aria-label="Show desktop"
				className="w-3.5 border border-[#46566b] bg-linear-to-b from-[#9babbf] to-[#5f7189] shadow-[inset_0_0_0_1px_#b2c0d1]"
			/>
		</div>
	</footer>
);

export default function App() {
	return (
		<div className="flex h-screen flex-col overflow-hidden bg-[#1d1e20]">
			<main className="relative flex-1 overflow-hidden bg-radial-[at_38%_92%] from-[#28505f] to-[#1d1e20] to-35%">
				<Wallpaper />
				<Gadget />
				<section className={`absolute top-[100px] left-[1000px] h-[533px] w-[293px] ${frame}`} />
				<MainWindow />
				<section
					className={`absolute top-[300px] left-[783px] flex h-[399px] w-[486px] px-[7px] pb-[7px] ${frame}`}
				>
					<div className="flex-1 bg-[#7f7f7f]" />
				</section>
				<CellView />
				<ObjectWindow />
				<ArmorWindow />
				<PropertiesWindow />

				{/* highlight marks laid over the windows */}
				<div className="absolute top-[61px] left-[456px] h-[28px] w-[61px] border-3 border-[#e81010]" />
				<div className="absolute top-[451px] left-[197px] h-[3px] w-[148px] rounded-full bg-[#dc1018]" />
				<div className="absolute top-[450px] left-[1096px] h-[5px] w-[126px] bg-[#00127a]" />
			</main>
			<Taskbar />
		</div>
	);
}
